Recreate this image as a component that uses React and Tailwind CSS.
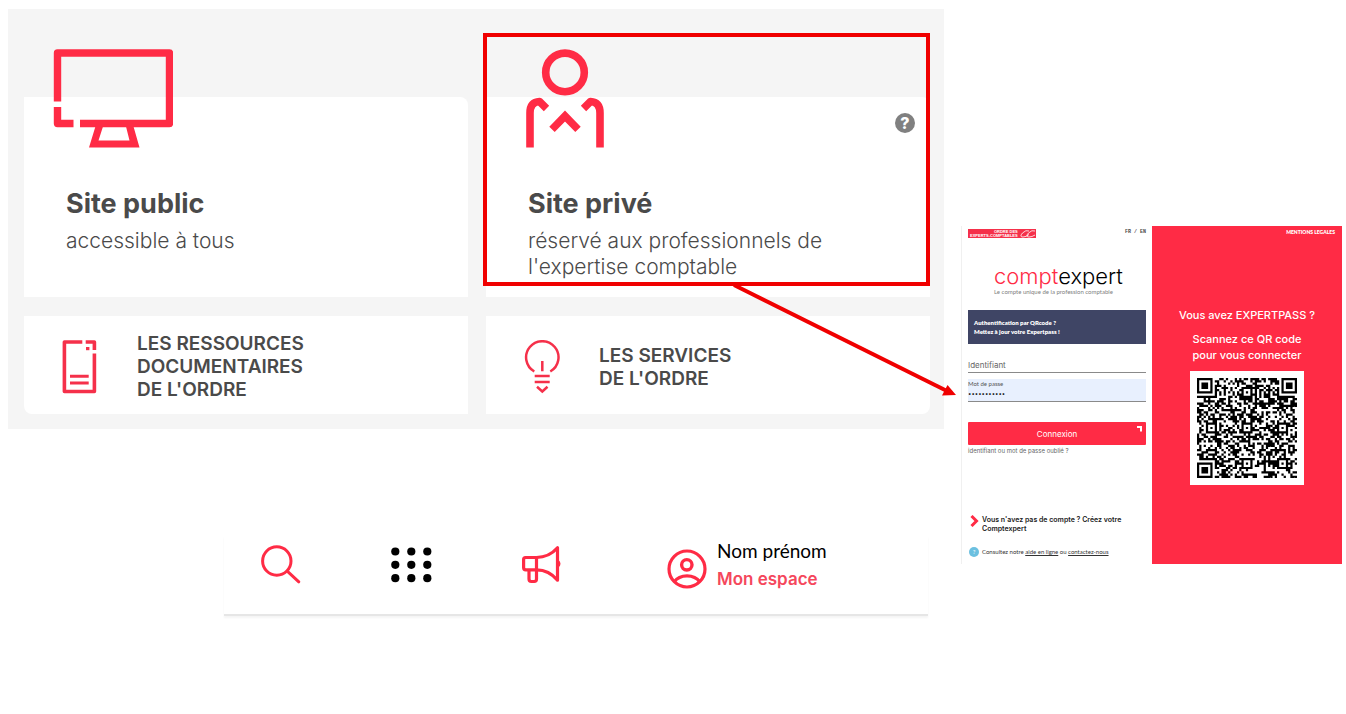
import { memo } from "react";

const QR_SIZE = 45;
const QR_CENTERS = [6, 22, 38];

// Square ring patterns: finders in three corners, alignment marks on the grid
function ringCell(dx, dy, max) {
  const d = Math.max(Math.abs(dx), Math.abs(dy));
  if (d > max) return null;
  return max === 4 ? d !== 4 && d !== 2 : d !== 1;
}

function buildQrPath() {
  const last = QR_SIZE - 4;
  const finders = [[3, 3], [last, 3], [3, last]];
  let seed = 20817;
  let path = "";
  for (let y = 0; y < QR_SIZE; y++) {
    for (let x = 0; x < QR_SIZE; x++) {
      seed = (seed * 1103515245 + 12345) % 2147483648;
      let dark = seed / 2147483648 > 0.48;
      if (x === 6 || y === 6) dark = (x + y) % 2 === 0;
      QR_CENTERS.forEach((cy) => {
        QR_CENTERS.forEach((cx) => {
          const cell = ringCell(x - cx, y - cy, 2);
          if (cell !== null) dark = cell;
        });
      });
      finders.forEach(([cx, cy]) => {
        const cell = ringCell(x - cx, y - cy, 4);
        if (cell !== null) dark = cell;
      });
      if (dark) path += `M${x} ${y}h1v1h-1z`;
    }
  }
  return path;
}

const qrPath = buildQrPath();

function MonitorIcon() {
  return (
    <svg width="120" height="99" viewBox="0 0 120 99" fill="none" aria-hidden="true">
      <path
        d="M4.5 52.5V4H116.5V74.5H27M4.5 58V74.5H20.5"
        stroke="#ff2b45"
        strokeWidth="7.4"
        strokeLinejoin="round"
      />
      <path
        d="M43.5 74H79.5L86.5 98.5H36L43.5 74ZM50 77.5L45.5 91.5H76.5L73 77.5H50Z"
        fill="#ff2b45"
        fillRule="evenodd"
      />
    </svg>
  );
}

function PersonIcon() {
  return (
    <svg width="78" height="99" viewBox="0 0 78 99" fill="none" stroke="#ff2b45" strokeWidth="7.6" aria-hidden="true">
      <circle cx="39" cy="23.4" r="19.3" />
      <path d="M4 98.5V64Q4 53 13.5 52.5L20.5 59.5" strokeLinejoin="round" />
      <path d="M74 98.5V64Q74 53 64.5 52.5L57.5 59.5" strokeLinejoin="round" />
      <path d="M26 80.3L39 67L52 80.3" />
    </svg>
  );
}

function DocumentIcon() {
  return (
    <svg width="36" height="54" viewBox="0 0 36 54" fill="none" stroke="#f5304a" strokeWidth="3.6" aria-hidden="true">
      <path d="M20.3 2H2.4V51.5H32.4V13.5M23.7 2H32.4V10" strokeLinejoin="round" />
      <path d="M8 36.3H26.7M8 43H26.7" strokeWidth="3" />
      <rect x="24" y="7" width="3.4" height="3.2" fill="#f5304a" stroke="none" />
    </svg>
  );
}

function BulbIcon() {
  return (
    <svg width="36" height="54" viewBox="0 0 36 54" fill="none" stroke="#f5304a" strokeWidth="2.5" aria-hidden="true">
      <path d="M10.3 31.5A16.2 16.2 0 1 1 26.3 31.5M18.3 21V31.3M10.7 36H25.7M10.7 42H25.7M13 46.8L18.3 51.5L23.5 46.8" />
    </svg>
  );
}

function SearchIcon() {
  return (
    <svg width="40" height="40" viewBox="0 0 40 40" fill="none" stroke="#ff2b45" strokeWidth="3" strokeLinecap="round" aria-hidden="true">
      <circle cx="15.8" cy="16" r="14.2" />
      <path d="M26.5 26.3L37.8 36.8" />
    </svg>
  );
}

function GridIcon() {
  return (
    <svg width="41" height="37" viewBox="0 0 41 37" aria-hidden="true">
      {[4.5, 17.8, 31.2].map((y) =>
        [4.3, 20.3, 36.3].map((x) => <circle key={`${x}-${y}`} cx={x} cy={y} r="4.1" />)
      )}
    </svg>
  );
}

function MegaphoneIcon() {
  return (
    <svg width="40" height="40" viewBox="0 0 40 40" fill="none" stroke="#ff2b45" strokeWidth="3.2" strokeLinejoin="round" aria-hidden="true">
      <path d="M14.500 12.5H3.5Q1.6 12.5 1.6 14.5V22.5Q1.6 24.8 3.8 24.8H14.5Z" />
      <path d="M7 25V34Q7 36.5 9.3 36.5H12.2Q14.5 36.5 14.5 34V25" />
      <path d="M14.5 12.5Q27 12.5 35.5 2.8V35.2Q27 24.8 14.5 24.8" />
      <path d="M36 15.500Q39.500 18.500 36 22Z" fill="#ff2b45" strokeWidth="1.5" />
    </svg>
  );
}

function UserIcon() {
  return (
    <svg width="40" height="40" viewBox="0 0 40 40" fill="none" stroke="#ff2b45" strokeWidth="3.2" aria-hidden="true">
      <circle cx="20" cy="20" r="18" />
      <circle cx="19.8" cy="15.8" r="5.2" strokeWidth="3.4" />
      <path d="M7 33Q11.5 26.8 20 26.8T33 33" />
    </svg>
  );
}

const SiteCard = memo(function SiteCard({ icon, title, text, className, children }) {
  return (
    <article className={`relative bg-white px-[42px] pb-4 min-h-[200px] ${className}`}>
      <div className="-mt-12 -ml-[13px] flex h-[99px]">{icon}</div>
      <h2 className="mt-9 text-[27px] leading-10 font-bold text-[#4a4a4a]">{title}</h2>
      <p className="mt-1 text-[21px] leading-[26px] font-light text-[#4a4a4a]">{text}</p>
      {children}
    </article>
  );
});

function LinkCard({ icon, lines, className }) {
  return (
    <a href="#" className={`flex min-h-[98px] items-center gap-[39px] bg-white pt-[3px] pl-[38px] ${className}`}>
      {icon}
      <span className="text-[19px] leading-[23px] font-semibold text-[#4a4a4a]">
        {lines.map((line) => (
          <span key={line} className="block">{line}</span>
        ))}
      </span>
    </a>
  );
}

function SitesSection() {
  return (
    <section className="grid grid-cols-2 gap-x-[18px] gap-y-[19px] bg-[#f5f5f5] pt-[88px] pr-[14px] pb-[15px] pl-4">
      <SiteCard icon={<MonitorIcon />} title="Site public" text="accessible à tous" className="rounded-tr-lg" />
      <SiteCard
        icon={<div className="ml-[11px]"><PersonIcon /></div>}
        title="Site privé"
        text={<>réservé aux professionnels de<br />l'expertise comptable</>}
        className="rounded-tr-lg"
      >
        <button className="absolute top-4 right-[15px] h-5 w-5 rounded-full bg-[#808080] text-center text-[16px] leading-5 font-extrabold text-white">
          ?
        </button>
        {/* Highlight frame and its arrow */}
        <div className="pointer-events-none absolute -top-16 right-0 bottom-[11px] -left-[3px] z-10 border-4 border-[#f00000]" />
        <svg
          className="pointer-events-none absolute top-[186px] left-[246px] z-10"
          width="226"
          height="114"
          viewBox="0 0 226 114"
          fill="none"
          aria-hidden="true"
        >
          <path d="M2 2L214 107.500" stroke="#f00000" strokeWidth="4" />
          <path d="M224 112L215.500 102L210 112.500Z" fill="#f00000" />
        </svg>
      </SiteCard>
      <LinkCard
        icon={<DocumentIcon />}
        lines={["LES RESSOURCES", "DOCUMENTAIRES", "DE L'ORDRE"]}
        className="rounded-bl-lg"
      />
      <LinkCard icon={<BulbIcon />} lines={["LES SERVICES", "DE L'ORDRE"]} className="rounded-br-lg" />
    </section>
  );
}

function AccountBar() {
  return (
    <nav className="mt-[107px] mr-4 ml-[216px] flex items-center gap-[90px] border-b-2 border-[#e6e6e6] pb-5 pl-[37px] shadow-[0_2px_2px_#f5f5f5]">
      <button aria-label="Rechercher"><SearchIcon /></button>
      <button aria-label="Applications"><GridIcon /></button>
      <button aria-label="Actualités"><MegaphoneIcon /></button>
      <div className="ml-[15px] flex items-center gap-[10px]">
        <div className="pt-2"><UserIcon /></div>
        <div className="leading-[29px]">
          <p className="font-[Lato,sans-serif] text-[19px] text-black">Nom prénom</p>
          <a href="#" className="block text-[17px] font-semibold text-[#f5475c]">Mon espace</a>
        </div>
      </div>
    </nav>
  );
}

function OrdreLogo() {
  return (
    <div className="flex h-[9px] w-[68px] items-center gap-px bg-[#f5304a] pl-[2px] text-right font-['Liberation_Sans',sans-serif] text-[4px] leading-[4px] font-bold text-white">
      <span>ORDRE DES<br />EXPERTS-COMPTABLES</span>
      <svg width="17" height="9" viewBox="0 0 17 9" fill="none" stroke="white" strokeWidth="0.8" aria-hidden="true">
        <path d="M10 2Q7 .5 3.500 4Q0 8 4 8Q7 8 10 5.500M16 2Q13 .5 9.500 4Q6 8 10 8Q13 8 16 6" />
      </svg>
    </div>
  );
}

function LoginForm() {
  return (
    <div className="flex-1 border-l border-[#f0f0f0] bg-white pt-[3px] pr-[6px] pb-[6px] pl-[6px]">
      <header className="flex items-start justify-between">
        <OrdreLogo />
        <span className="font-['Liberation_Mono',monospace] text-[5px] leading-[7px] font-bold text-[#4a4a4a]">FR / EN</span>
      </header>

      <div className="mt-[26px] pl-[26px]">
        <h1 className="text-[22px] leading-6 font-light text-black">
          <span className="text-[#ff2b45]">compt</span>expert
        </h1>
        <p className="font-[Lato,sans-serif] text-[6px] leading-[8px] text-[#808080]">Le compte unique de la profession comptable</p>
      </div>

      <div className="mt-[14px] bg-[#3f4565] px-[6px] py-2 font-[Lato,sans-serif] text-[6px] leading-[9px] font-extrabold text-white">
        <p>Authentification par QRcode ?</p>
        <p>Mettez à jour votre Expertpass !</p>
      </div>

      <form onSubmit={(e) => e.preventDefault()}>
        <input
          type="text"
          aria-label="Identifiant"
          placeholder="Identifiant"
          className="mt-[14px] block h-[15px] w-full border-b border-[#8a8a8a] text-[8px] placeholder:text-[#666]"
        />
        <div className="mt-[6px] h-[23px] border-b border-[#8a8a8a] bg-[#e8f0fe]">
          <label htmlFor="password" className="block font-[Lato,sans-serif] text-[6px] leading-[9px] text-[#555]">Mot de passe</label>
          <input
            id="password"
            type="password"
            defaultValue="motdepasse1"
            className="block h-[11px] w-full text-[6px] leading-[11px] text-black outline-none"
          />
        </div>
        <button className="relative mt-5 block h-[23px] w-full rounded-[1px] bg-[#ff2b45] text-[8px] text-white">
          Connexion
          <svg className="absolute top-1 right-1" width="5" height="6" viewBox="0 0 5 6" fill="none" stroke="white" strokeWidth="2" aria-hidden="true">
            <path d="M0 1H4V5.500" />
          </svg>
        </button>
      </form>
      <a href="#" className="mt-[2px] block text-[6px] leading-[7px] text-[#666]">identifiant ou mot de passe oublié ?</a>

      <a href="#" className="mt-[61px] flex items-start gap-[3px] pl-[2px] text-[7px] leading-[9px] font-semibold text-[#222]">
        <svg width="9" height="12" viewBox="0 0 9 12" fill="none" stroke="#ff2b45" strokeWidth="3" aria-hidden="true">
          <path d="M1.500 1L6.500 6L1.500 11" />
        </svg>
        <span>Vous n'avez pas de compte ? Créez votre<br />Comptexpert</span>
      </a>
      <div className="mt-[14px] flex items-center gap-[3px] pl-px font-[Lato,sans-serif] text-[6px] leading-[10px] text-[#333]">
        <span className="h-[10px] w-[10px] rounded-full bg-[#6cc0e0] text-center text-white">?</span>
        <p>
          Consultez notre <a href="#" className="underline">aide en ligne</a> ou <a href="#" className="underline">contactez-nous</a>
        </p>
      </div>
    </div>
  );
}

function QrPanel() {
  return (
    <div className="flex w-[190px] flex-col items-center bg-[#ff2b45] text-center text-[11px] font-medium text-white">
      <a href="#" className="mt-[3px] mr-[7px] self-end font-[Lato,sans-serif] text-[5px] leading-[7px] font-extrabold">MENTIONS LEGALES</a>
      <p className="mt-[71px] leading-4">Vous avez EXPERTPASS ?</p>
      <p className="mt-2 leading-4">Scannez ce QR code<br />pour vous connecter</p>
      <svg className="mt-2 bg-white p-[7px]" width="114" height="114" viewBox="0 0 45 45" aria-label="QR code">
        <path d={qrPath} fill="#000" />
      </svg>
    </div>
  );
}

export default function App() {
  return (
    <main className="flex items-start gap-[17px] bg-white pt-[9px] pr-1 pb-24 pl-2 font-[Inter,sans-serif]">
      <div className="min-w-0 flex-1">
        <SitesSection />
        <AccountBar />
      </div>
      <aside className="mt-[217px] flex min-h-[338px] w-[381px] shrink-0">
        <LoginForm />
        <QrPanel />
      </aside>
    </main>
  );
}
